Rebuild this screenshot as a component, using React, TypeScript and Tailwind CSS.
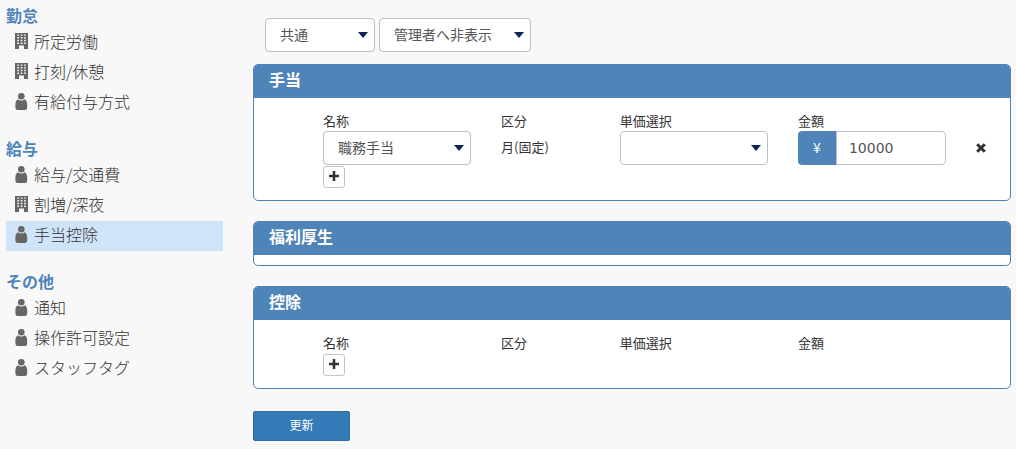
import type { ReactNode } from 'react'

type IconName = 'building' | 'person'

interface MenuGroup {
  title: string
  items: { label: string; icon: IconName; active?: boolean }[]
}

const MENU: MenuGroup[] = [
  {
    title: '勤怠',
    items: [
      { label: '所定労働', icon: 'building' },
      { label: '打刻/休憩', icon: 'building' },
      { label: '有給付与方式', icon: 'person' },
    ],
  },
  {
    title: '給与',
    items: [
      { label: '給与/交通費', icon: 'person' },
      { label: '割増/深夜', icon: 'building' },
      { label: '手当控除', icon: 'person', active: true },
    ],
  },
  {
    title: 'その他',
    items: [
      { label: '通知', icon: 'person' },
      { label: '操作許可設定', icon: 'person' },
      { label: 'スタッフタグ', icon: 'person' },
    ],
  },
]

export default function App() {
  return (
    <div className="flex min-h-screen bg-[#f8f8f8] font-['Noto_Sans_CJK_JP',sans-serif] text-[13px] text-[#333]">
      <Sidebar />
      <main className="min-w-0 flex-1 pt-[18px] pr-[5px] pl-[30px]">
        <div className="mb-3 flex gap-1 pl-3">
          <SelectBox label="区分" options={['共通']} className="w-[110px]" />
          <SelectBox label="表示設定" options={['管理者へ非表示']} className="w-[152px]" />
        </div>

        <Panel title="手当">
          <div className="pt-[13px] pb-3">
            <ColumnHeads />
            <AllowanceRow />
            <AddButton />
          </div>
        </Panel>
        <Panel title="福利厚生">
          <div className="h-[10px]" />
        </Panel>
        <Panel title="控除">
          <div className="pt-[13px] pb-3">
            <ColumnHeads />
            <AddButton />
          </div>
        </Panel>

        <button
          type="button"
          className="mt-[2px] h-[30px] w-[97px] rounded-xs border border-[#2e6da4] bg-[#337ab7] pb-[2px] text-xs text-white"
        >
          更新
        </button>
      </main>
    </div>
  )
}

function Sidebar() {
  return (
    <nav className="flex w-[223px] shrink-0 flex-col gap-[18px] pt-[3px] pl-[6px] text-base">
      {MENU.map((group) => (
        <section key={group.title}>
          <h2 className="h-[25px] font-bold leading-6 text-[#4f84b8]">{group.title}</h2>
          <ul>
            {group.items.map((item) => (
              <li key={item.label}>
                <a
                  href="#"
                  className={`flex h-[30px] items-center gap-[6px] pb-1 pl-[9px] font-light text-[#333] ${item.active ? 'bg-[#d0e4f9]' : ''}`}
                >
                  {item.icon === 'building' ? <BuildingIcon /> : <PersonIcon />}
                  {item.label}
                </a>
              </li>
            ))}
          </ul>
        </section>
      ))}
    </nav>
  )
}

function Panel({ title, children }: { title: string; children: ReactNode }) {
  return (
    <section className="mb-5 overflow-hidden rounded-[5px] border border-[#4f84b8] bg-white">
      <h3 className="h-[33px] bg-[#4f84b8] pl-[15px] text-base font-bold leading-7 text-white">{title}</h3>
      {children}
    </section>
  )
}

function ColumnHeads() {
  return (
    <div className="grid grid-cols-[3fr_2fr_3fr_3fr_34px] pl-[69px] leading-5">
      <span>名称</span>
      <span>区分</span>
      <span>単価選択</span>
      <span>金額</span>
    </div>
  )
}

function AllowanceRow() {
  return (
    <div className="grid grid-cols-[3fr_2fr_3fr_3fr_34px] items-center pl-[69px]">
      <div className="pr-[30px]">
        <SelectBox label="名称" options={['職務手当']} className="w-full" />
      </div>
      <span className="pb-[2px]">月(固定)</span>
      <div className="pr-[30px]">
        <SelectBox label="単価選択" options={['']} className="w-full" />
      </div>
      <label className="mr-[30px] flex h-[34px] overflow-hidden rounded-sm">
        <span className="flex w-[38px] shrink-0 items-center justify-center bg-[#4f84b8] pb-[2px] text-sm text-white">¥</span>
        <input
          type="text"
          aria-label="金額"
          defaultValue="10000"
          className="w-full min-w-0 rounded-r-sm border border-[#b8bec4] bg-white px-3 font-['DejaVu_Sans',sans-serif] text-sm text-[#555]"
        />
      </label>
      <button type="button" aria-label="削除" className="w-[10px]">
        <svg viewBox="0 0 10 10" className="size-[10px]" stroke="#333" strokeWidth="3">
          <path d="M1.2 1.2 8.8 8.8M8.8 1.2 1.2 8.8" />
        </svg>
      </button>
    </div>
  )
}

function AddButton() {
  return (
    <button
      type="button"
      aria-label="追加"
      className="mt-px ml-[69px] flex size-[22px] items-center justify-center rounded-[3px] border border-[#c4c4c4] bg-white pb-[2px]"
    >
      <svg viewBox="0 0 10 10" className="size-[10px]" stroke="#333" strokeWidth="2.6">
        <path d="M5 0V10M0 5H10" />
      </svg>
    </button>
  )
}

function SelectBox({ label, options, className }: { label: string; options: string[]; className: string }) {
  return (
    <div className={`relative ${className}`}>
      <select
        aria-label={label}
        className="block h-[34px] w-full appearance-none rounded-sm border border-[#b8bec4] bg-white pr-6 pb-[3px] pl-[14px] text-sm text-[#555]"
      >
        {options.map((option) => (
          <option key={option}>{option}</option>
        ))}
      </select>
      <svg viewBox="0 0 10 6" className="pointer-events-none absolute top-[14px] right-[7px] h-[6px] w-[10px]">
        <path d="M0 0H10L5 6Z" fill="#0b2559" />
      </svg>
    </div>
  )
}

function BuildingIcon() {
  return (
    <svg viewBox="0 0 13 16" className="h-4 w-[13px]" fill="#666">
      <path
        fillRule="evenodd"
        d="M0 0H13V16H9V12.6H4V16H0ZM2.3 1.4V2.8H4V1.4ZM5.7 1.4V2.8H7.4V1.4ZM9.1 1.4V2.8H10.8V1.4ZM2.3 4.1V5.5H4V4.1ZM5.7 4.1V5.5H7.4V4.1ZM9.1 4.1V5.5H10.8V4.1ZM2.3 6.8V8.2H4V6.8ZM5.7 6.8V8.2H7.4V6.8ZM9.1 6.8V8.2H10.8V6.8ZM2.3 9.5V10.9H4V9.5ZM5.7 9.5V10.9H7.4V9.5ZM9.1 9.5V10.9H10.8V9.5Z"
      />
    </svg>
  )
}

function PersonIcon() {
  return (
    <svg viewBox="0 0 13 17" className="h-[17px] w-[13px]" fill="#666">
      <circle cx="6.3" cy="3.3" r="3.3" />
      <path d="M3 6.2C4.8 8 7.8 8 9.6 6.2 11.3 7 12.2 9 12.2 11.5V14.5Q12.2 17 9.8 17H2.8Q.4 17 .4 14.5V11.5C.4 9 1.3 7 3 6.2Z" />
    </svg>
  )
}
